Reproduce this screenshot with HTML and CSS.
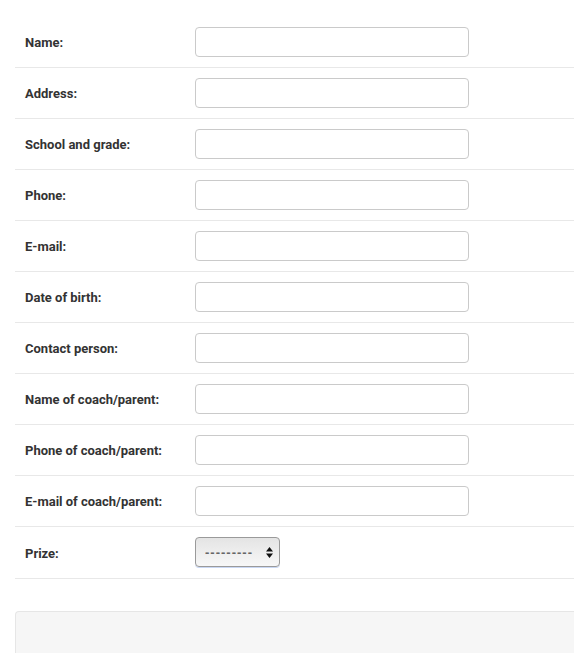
FILE: index.html
```html
<!DOCTYPE html>
<html lang="en">
<head>
<meta charset="utf-8">
<title>Registration</title>
<link rel="stylesheet" href="styles.css">
</head>
<body>
<div class="page">
  <table class="form-table">
    <tbody>
      <tr><th>Name:</th><td><input type="text" class="field"></td></tr>
      <tr><th>Address:</th><td><input type="text" class="field"></td></tr>
      <tr><th>School and grade:</th><td><input type="text" class="field"></td></tr>
      <tr><th>Phone:</th><td><input type="text" class="field"></td></tr>
      <tr><th>E-mail:</th><td><input type="text" class="field"></td></tr>
      <tr><th>Date of birth:</th><td><input type="text" class="field"></td></tr>
      <tr><th>Contact person:</th><td><input type="text" class="field"></td></tr>
      <tr><th>Name of coach/parent:</th><td><input type="text" class="field"></td></tr>
      <tr><th>Phone of coach/parent:</th><td><input type="text" class="field"></td></tr>
      <tr><th>E-mail of coach/parent:</th><td><input type="text" class="field"></td></tr>
      <tr class="last"><th>Prize:</th><td><select class="picker"><option>---------</option></select></td></tr>
    </tbody>
  </table>
  <div class="well"></div>
</div>
</body>
</html>
```
FILE: styles.css
```css
html, body {
  margin: 0;
  padding: 0;
  background: #fff;
}
body {
  font-family: Roboto, "Liberation Sans", sans-serif;
  font-size: 13px;
  color: #333;
}
.page {
  padding: 17px 0 0 15px;
}
.form-table {
  width: 100%;
  border-collapse: collapse;
  border-spacing: 0;
}
.form-table th,
.form-table td {
  padding: 10px;
  vertical-align: middle;
  text-align: left;
  border-top: 1px solid #e8e8e8;
}
.form-table tr:first-child th,
.form-table tr:first-child td {
  border-top: none;
}
.form-table tr.last th,
.form-table tr.last td {
  border-bottom: 1px solid #e8e8e8;
}
.form-table th {
  width: 150px;
  font-weight: 700;
  font-size: 13px;
  line-height: 18px;
  color: #333;
  padding-top: 11px;
  padding-bottom: 9px;
}
.field {
  display: block;
  box-sizing: border-box;
  width: 274px;
  height: 30px;
  margin: 0;
  border: 1px solid #cacaca;
  border-radius: 4px;
  background: #fff;
  padding: 4px 8px;
  font: inherit;
}
.picker {
  display: block;
  -webkit-appearance: none;
  appearance: none;
  box-sizing: border-box;
  width: 85px;
  height: 30px;
  margin: 0 0 1px 0;
  padding: 0 0 0 9px;
  border: 1px solid #9a9a9a;
  border-radius: 4px;
  box-shadow: 0 1px 0 #c9d7f3;
  background:
    url("data:image/svg+xml,%3Csvg xmlns='http://www.w3.org/2000/svg' width='7' height='11'%3E%3Cpath d='M3.5 0L7 4.5H0z M0 6.5H7L3.5 11z' fill='%23111'/%3E%3C/svg%3E") no-repeat right 6px center,
    linear-gradient(#e4e4e4, #f7f7f7);
  font-family: "Liberation Sans", sans-serif;
  font-size: 13px;
  font-weight: 700;
  letter-spacing: 1px;
  color: #666;
}
.well {
  margin-top: 32px;
  min-height: 60px;
  background: #f6f6f6;
  border: 1px solid #e6e6e6;
  border-right: none;
  border-radius: 4px 0 0 4px;
}
```
